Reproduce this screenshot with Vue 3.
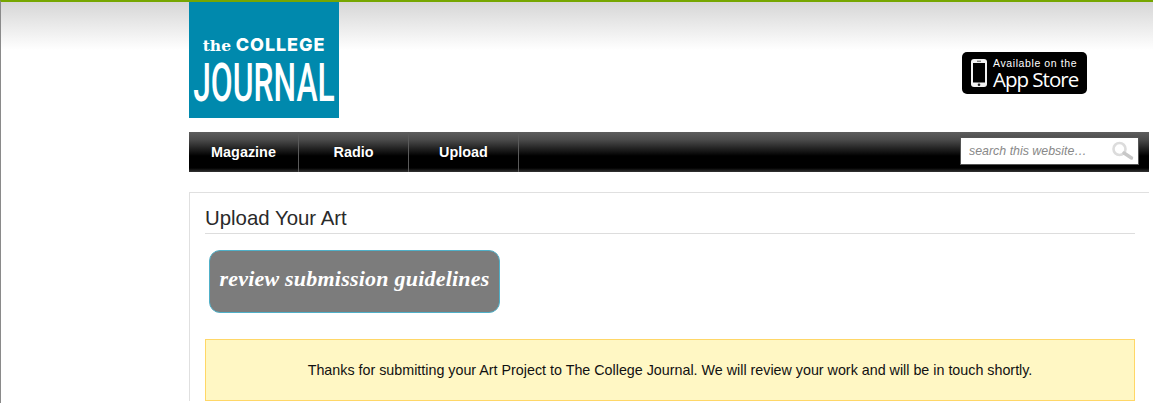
<template>
  <div class="page">
    <div class="wrap">
      <header class="header">
        <a class="logo" href="#">
          <span class="logo-top"><span class="logo-the">the</span> COLLEGE</span>
          <span class="logo-main">JOURNAL</span>
        </a>
        <a class="app-badge" href="#">
          <svg class="phone" width="16" height="28" viewBox="0 0 16 28">
            <rect x="0" y="0" width="16" height="28" rx="3" fill="#f2f2f2" />
            <rect x="2" y="4" width="12" height="19.5" fill="#000" />
            <circle cx="8" cy="25.7" r="1.3" fill="#222" />
            <rect x="6" y="1.7" width="4" height="1" fill="#555" />
          </svg>
          <span class="app-text">
            <span class="app-small">Available on the</span>
            <span class="app-big">App Store</span>
          </span>
        </a>
      </header>

      <nav class="nav">
        <a v-for="item in navItems" :key="item" class="nav-item" href="#">{{ item }}</a>
        <form class="search" @submit.prevent>
          <input class="search-input" type="text" placeholder="search this website…" />
          <svg class="search-icon" width="22" height="20" viewBox="0 0 22 20">
            <circle cx="7.5" cy="8" r="6" fill="none" stroke="#dcdcdc" stroke-width="2.6" />
            <path d="M12 12 L19.5 17" stroke="#c8c8c8" stroke-width="3.4" stroke-linecap="round" />
          </svg>
        </form>
      </nav>

      <main class="content">
        <h1 class="title">Upload Your Art</h1>
        <a class="guidelines" href="#">review submission guidelines</a>
        <div class="notice">Thanks for submitting your Art Project to The College Journal. We will review your work and will be in touch shortly.</div>
      </main>
    </div>
  </div>
</template>

<script setup>
const navItems = ['Magazine', 'Radio', 'Upload']
</script>

<style>
html, body {
  margin: 0;
  background: #fff;
  overflow: hidden;
}
</style>

<style scoped>
.page {
  height: 403px;
  box-sizing: border-box;
  border-top: 2px solid #76a600;
  border-left: 1px solid #8a8a8a;
  background: linear-gradient(#d6d6d6, #fff 48px);
  font-family: "Liberation Sans", Arial, sans-serif;
  overflow: hidden;
}

.wrap {
  width: 960px;
  margin-left: 188px;
}

.header {
  display: flex;
  justify-content: space-between;
  align-items: flex-start;
  height: 130px;
}

.logo {
  width: 150px;
  height: 116px;
  background: #0089ad;
  color: #fff;
  text-decoration: none;
  display: flex;
  flex-direction: column;
  align-items: center;
  overflow: hidden;
}

.logo-top {
  margin-top: 33px;
  font-family: "Inter", sans-serif;
  font-weight: 800;
  font-size: 18px;
  line-height: 20px;
  letter-spacing: 0.9px;
  white-space: nowrap;
}

.logo-the {
  font-family: "DejaVu Serif", serif;
  font-weight: 700;
  font-size: 15.5px;
  letter-spacing: 0;
}

.logo-main {
  margin-top: 3px;
  font-family: "Roboto", sans-serif;
  font-weight: 500;
  font-size: 53px;
  line-height: 48px;
  transform: scaleX(0.6);
  white-space: nowrap;
}

.app-badge {
  width: 125px;
  height: 42px;
  margin-top: 50px;
  margin-right: 62px;
  background: #000;
  border-radius: 5px;
  color: #fff;
  text-decoration: none;
  display: flex;
  align-items: center;
  gap: 6px;
  padding-left: 9px;
  box-sizing: border-box;
}

.app-text {
  display: flex;
  flex-direction: column;
}

.app-small {
  font-size: 10.5px;
  line-height: 11px;
  letter-spacing: 0.6px;
  white-space: nowrap;
}

.app-big {
  font-family: "Open Sans", sans-serif;
  font-weight: 500;
  font-size: 20.5px;
  line-height: 20px;
  letter-spacing: -1px;
  white-space: nowrap;
}

.nav {
  height: 40px;
  display: flex;
  align-items: stretch;
  background: linear-gradient(#5e5e5e, #4a4a4a 8px, #000 24px, #000 36px, #333);
}

.nav-item {
  width: 109px;
  border-right: 1px solid #5a5a5a;
  display: flex;
  align-items: center;
  justify-content: center;
  color: #fff;
  font-size: 14.4px;
  font-weight: 700;
  text-decoration: none;
  text-shadow: 0 0 1px #000;
}

.search {
  margin-left: auto;
  margin-right: 10px;
  margin-top: 5px;
  width: 177px;
  height: 26px;
  background: #fff;
  border: 1px solid #555;
  display: flex;
  align-items: center;
}

.search-input {
  flex: 1;
  min-width: 0;
  border: 0;
  outline: 0;
  background: transparent;
  padding: 0 0 0 8px;
  font-family: "Liberation Sans", Arial, sans-serif;
  font-size: 12.4px;
  font-style: italic;
  color: #888;
}

.search-input::placeholder {
  color: #888;
  opacity: 1;
}

.search-icon {
  margin-right: 4px;
  flex: none;
}

.content {
  margin-top: 20px;
  border-top: 1px solid #e0e0e0;
  border-left: 1px solid #e0e0e0;
  padding: 13px 14px 0 15px;
  background: #fff;
}

.title {
  margin: 0;
  padding-bottom: 2px;
  border-bottom: 1px solid #ddd;
  font-size: 20.4px;
  font-weight: 400;
  line-height: 25px;
  color: #2a2a2a;
}

.guidelines {
  display: flex;
  align-items: center;
  justify-content: center;
  box-sizing: border-box;
  width: 291px;
  height: 63px;
  margin: 16px 0 26px 4px;
  padding-bottom: 5px;
  background: #7c7c7c;
  border: 1px solid #4fb0c8;
  border-radius: 11px;
  color: #fff;
  font-family: "Liberation Serif", serif;
  font-style: italic;
  font-weight: 700;
  font-size: 22px;
  letter-spacing: 0.22px;
  text-decoration: none;
  white-space: nowrap;
}

.notice {
  box-sizing: border-box;
  height: 62px;
  display: flex;
  align-items: center;
  justify-content: center;
  background: #fff7c4;
  border: 1px solid #ffd767;
  color: #111;
  font-size: 14.3px;
}
</style>
